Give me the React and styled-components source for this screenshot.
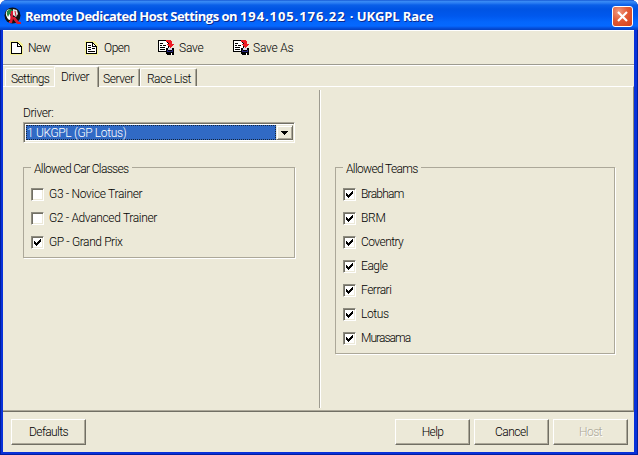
import React from "react";
import styled, { createGlobalStyle } from "styled-components";

const Global = createGlobalStyle`
  *{box-sizing:border-box}
  html,body{margin:0;padding:0;background:#fff;overflow:hidden}
`;
const Window = styled.div`
  width:638px;height:455px;display:flex;flex-direction:column;
  border-radius:7px 7px 0 0;overflow:hidden;background:#0831d9;
  font:300 12px/14px Roboto,"Liberation Sans",sans-serif;color:#000;cursor:default;
  box-shadow:inset 1px -1px #001ea0,inset -1px 0 #001ea0;
`;
const TitleBar = styled.header`
  height:30px;flex:none;display:flex;align-items:center;padding:2px 5px 0 4px;
  background:linear-gradient(#0845c8 0,#3c8df5 1px,#2a7cf2 3px,#0a5fe8 5px,#0054e3 9px,#0058ee 16px,#0466fc 22px,#0568ff 26px,#0550dd 28px,#0440c0 30px);
`;
const Title = styled.h1`
  margin:0 0 0 3px;flex:1;white-space:pre;color:#fff;
  font:700 13px/18px "Open Sans",sans-serif;text-shadow:1px 1px 0 #0a2a91;
`;
const Close = styled.button`
  width:21px;height:21px;padding:0;border:1px solid #fff;border-radius:3px;display:grid;place-items:center;
  background:radial-gradient(circle at 30% 25%,#f09a80 0,#e35b35 45%,#d2401b 100%);
`;
const Client = styled.main`
  margin:0 4px 3px 3px;height:422px;background:#ece9d8;border-top:1px solid #fff;display:flex;flex-direction:column;
`;
const Text = styled.span`
  white-space:pre;letter-spacing:${p => p.$ls || 0}px;
`;
const Toolbar = styled.nav`
  height:35px;flex:none;display:grid;grid-template-columns:75px 73px 75px 100px;padding:0 0 1px 7px;
  border-bottom:1px solid #fff;box-shadow:inset 0 -1px #9d9b90;
`;
const Tool = styled.div`
  display:flex;align-items:center;gap:${p => p.$gap}px;
  svg{flex:none}
`;
const Tabs = styled.div`
  height:20px;flex:none;display:flex;align-items:flex-end;padding-left:2px;
`;
const Tab = styled.div`
  width:${p => p.$w}px;height:${p => (p.$active ? 20 : 18)}px;padding:3px 0 0 ${p => p.$pad}px;
  border-top:1px solid #fff;border-left:${p => (p.$left ? "1px solid #fff" : "0")};
  border-right:${p => (p.$active || !p.$first ? "1px solid #716f64" : "0")};
  box-shadow:${p => (p.$first ? "none" : "inset -1px 0 #aca899")};border-radius:2px 2px 0 0;
  ${p => p.$active && "position:relative;margin-bottom:-1px;height:21px;background:#ece9d8;"}
`;
const Page = styled.section`
  height:326px;flex:none;display:grid;grid-template-columns:316px 1fr;padding:3px 0 3px;
  border-top:1px solid #fff;border-right:1px solid #8b897b;border-bottom:1px solid #716f64;
  box-shadow:inset 0 -1px #aca899;
`;
const LeftPane = styled.div`
  padding:16px 23px 0 20px;
`;
const RightPane = styled.div`
  border-left:1px solid #9d9b90;box-shadow:inset 1px 0 #fff;padding:71px 17px 0 15px;
`;
const FieldLabel = styled.div`
  height:16px;
`;
const Combo = styled.div`
  width:272px;height:21px;display:flex;background:#fff;border:1px solid;border-color:#aca899 #fff #fff #aca899;
  box-shadow:inset 1px 1px #716f64,inset -1px -1px #ece9d8;padding:2px 1px 2px 2px;
`;
const Selected = styled.div`
  flex:1;background:#316ac5;color:#fff;border:1px dotted #14243a;padding:1px 0 0;line-height:13px;
`;
const Drop = styled.div`
  width:17px;background:#ece9d8;display:grid;place-items:center;border:1px solid;border-color:#ece9d8 #716f64 #716f64 #ece9d8;
  box-shadow:inset 1px 1px #fff,inset -1px -1px #aca899;
`;
const Group = styled.fieldset`
  margin:${p => p.$top || 0}px 0 0;min-width:0;width:${p => p.$w}px;height:${p => p.$h}px;padding:8px 0 0 7px;
  border:1px solid #aca899;box-shadow:1px 1px #fff;
`;
const Legend = styled.legend`
  height:13px;margin:0;padding:1px 3px 0;background:#ece9d8;
`;
const CheckRow = styled.div`
  height:24px;display:flex;align-items:center;gap:5px;
`;
const Box = styled.span`
  width:13px;height:13px;flex:none;background:#fff;border:1px solid;border-color:#8e8c80 #fff #fff #8e8c80;
  box-shadow:inset 1px 1px #716f64,inset -1px -1px #ece9d8;display:grid;place-items:center;
`;
const Footer = styled.footer`
  flex:1;display:flex;align-items:flex-start;gap:4px;padding:7px 6px 0 8px;
`;
const Spacer = styled.div`flex:1;`;
const Button = styled.button`
  width:75px;height:26px;padding:0 0 1px;border:1px solid;border-color:#fff #716f64 #716f64 #fff;
  background:#ece9d8;box-shadow:inset -1px -1px #aca899;font:inherit;
  color:${p => (p.disabled ? "#aca899" : "#000")};text-shadow:${p => (p.disabled ? "1px 1px #fff" : "none")};
`;

const AppIcon = () => (
  <svg width="18" height="18" viewBox="0 0 18 18">
    <circle cx="8.5" cy="8.5" r="8" fill="#111" />
    <path d="M3 3Q7 1 7 4L6 8 8 12 5 13Q0 8 3 3" fill="#fff" />
    <path d="M3 4 6 2 9 3 5 8 4 10Q2 7 3 4" fill="#238a45" />
    <path d="M9 2 13 3 14 7 12 10 9 8Z" fill="#e5e5e5" />
    <path d="M7 4H9V10H11L15 15H17V17H13L9 12 8 16H5V14H6Z" fill="#d71932" />
    <path d="M11 4 12 9" stroke="#d71932" />
  </svg>
);
const PageIcon = ({ lines }) => (
  <svg width="14" height="16" viewBox="0 0 14 16" shapeRendering="crispEdges">
    <path d="M0 1H9L13 5V15H0Z" fill="#f7f28a" opacity=".8" />
    <path d="M1.5 2.5H7.5L11.5 6.5V13.5H1.5Z" fill="#fff" stroke="#000" />
    <path d="M7.5 2.5V6.5H11.5" fill="none" stroke="#000" />
    {lines && <path d="M3 5.5H6M3 7.5H6M7 8.5H10M3 9.5H6M3 11.5H10" stroke="#000" />}
  </svg>
);
const SaveIcon = () => (
  <svg width="17" height="17" viewBox="0 0 17 17" shapeRendering="crispEdges">
    <path d="M.5 1.5H7.5L10.5 4.5V12.5H.5Z" fill="#fff" stroke="#000" />
    <path d="M2 4.5H5M2 6.5H4M5 6.5H8M2 8.5H7M2 10.5H7" stroke="#000" />
    <path d="M8 1H12L14 3V5H16L12.5 9 9 5H11V4L8 3Z" fill="#ed1c24" />
    <path d="M8 9H16V16H9L8 15Z" fill="#000" />
    <path d="M10 9H14V11H10Z" fill="#d8d8e8" />
    <path d="M9 11H10V12H14V11H15V13H9Z" fill="#27277d" />
    <path d="M13 14H14V16H13Z" fill="#fff" />
  </svg>
);
const Tick = () => (
  <svg width="7" height="7" viewBox="0 0 7 7" shapeRendering="crispEdges">
    <path d="M0 2H1V3H2V4H3V3H4V2H5V1H6V0H7V3H6V4H5V5H4V6H3V7H2V6H1V5H0Z" fill="#000" />
  </svg>
);

const Check = ({ label, on, ls }) => (
  <CheckRow><Box>{on && <Tick />}</Box><Text $ls={ls}>{label}</Text></CheckRow>
);
const classes = [["G3 - Novice Trainer", false, -0.32], ["G2 - Advanced Trainer", false, -0.35], ["GP - Grand Prix", true, -0.4]];
const teams = [["Brabham", -0.75], ["BRM", -0.3], ["Coventry", -0.55], ["Eagle", -0.45], ["Ferrari", -0.5], ["Lotus", -0.4], ["Murasama", -0.95]];

export default function App() {
  return (
    <>
      <Global />
      <Window>
        <TitleBar>
          <AppIcon />
          <Title>
            <Text $ls={-0.5}>Remote Dedicated Host Settings on </Text>
            <Text $ls={0.9}>194.105.176.22 </Text>
            <Text $ls={-0.1}>· UKGPL Race</Text>
          </Title>
          <Close aria-label="Close">
            <svg width="13" height="13" viewBox="0 0 13 13"><path d="M2 2 11 11M11 2 2 11" stroke="#fff" strokeWidth="2.2" /></svg>
          </Close>
        </TitleBar>
        <Client>
          <Toolbar>
            <Tool $gap={4}><PageIcon /><Text $ls={-0.5}>New</Text></Tool>
            <Tool $gap={5}><PageIcon lines /><Text $ls={-0.5}>Open</Text></Tool>
            <Tool $gap={4}><SaveIcon /><Text $ls={-0.2}>Save</Text></Tool>
            <Tool $gap={3}><SaveIcon /><Text $ls={-0.2}>Save As</Text></Tool>
          </Toolbar>
          <Tabs>
            <Tab $w={49} $pad={5} $first $left><Text $ls={-0.6}>Settings</Text></Tab>
            <Tab $w={45} $pad={6} $active $left><Text $ls={-0.4}>Driver</Text></Tab>
            <Tab $w={41} $pad={4}><Text $ls={-0.4}>Server</Text></Tab>
            <Tab $w={57} $pad={6} $left><Text $ls={-0.5}>Race List</Text></Tab>
          </Tabs>
          <Page>
            <LeftPane>
              <FieldLabel><Text $ls={-0.4}>Driver:</Text></FieldLabel>
              <Combo>
                <Selected><Text $ls={-0.35}>1 UKGPL (GP Lotus)</Text></Selected>
                <Drop><svg width="7" height="4" shapeRendering="crispEdges"><path d="M0 0H7V1H6V2H5V3H4V4H3V3H2V2H1V1H0Z" /></svg></Drop>
              </Combo>
              <Group $top={18} $w={272} $h={97}>
                <Legend><Text $ls={-0.66}>Allowed Car Classes</Text></Legend>
                {classes.map(([l, on, ls]) => <Check key={l} label={l} on={on} ls={ls} />)}
              </Group>
            </LeftPane>
            <RightPane>
              <Group $w={280} $h={193}>
                <Legend><Text $ls={-0.65}>Allowed Teams</Text></Legend>
                {teams.map(([l, ls]) => <Check key={l} label={l} on ls={ls} />)}
              </Group>
            </RightPane>
          </Page>
          <Footer>
            <Button><Text $ls={-0.6}>Defaults</Text></Button>
            <Spacer />
            <Button><Text $ls={-0.6}>Help</Text></Button>
            <Button><Text $ls={-0.5}>Cancel</Text></Button>
            <Button disabled><Text $ls={-0.6}>Host</Text></Button>
          </Footer>
        </Client>
      </Window>
    </>
  );
}
